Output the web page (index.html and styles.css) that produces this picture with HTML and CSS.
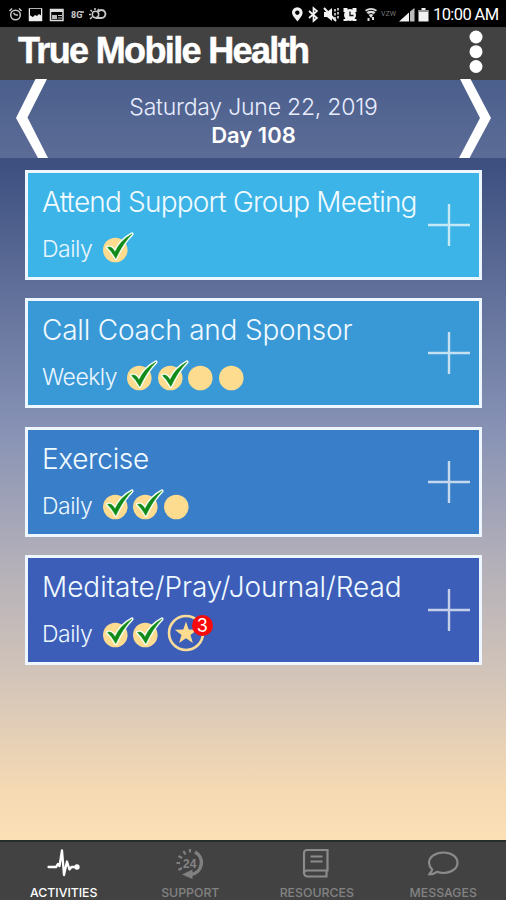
FILE: index.html
```
<!DOCTYPE html>
<html lang="en">
<head>
  <meta charset="UTF-8" />
  <meta name="viewport" content="width=device-width, initial-scale=1" />
  <title>True Mobile Health</title>
  <link rel="stylesheet" href="styles.css">
</head>
<body>
  <svg class="sprite" width="0" height="0">
    <symbol id="dot" viewBox="0 0 30 34">
      <circle cx="12.300" cy="20" r="12.300" fill="#fddc8f" />
    </symbol>
    <symbol id="check" viewBox="0 0 30 34" overflow="visible">
      <circle cx="12.300" cy="20" r="12.300" fill="#fddc8f" />
      <path d="M4.500 17.500Q8.500 15.500 12 22Q17.500 10 29 4Q20 13 12.800 28.500Q9 21.500 4.500 17.500Z" fill="#f4fff6" stroke="#f4fff6" stroke-width="3.200" stroke-linejoin="round" />
      <path d="M4.500 17.500Q8.500 15.500 12 22Q17.500 10 29 4Q20 13 12.800 28.500Q9 21.500 4.500 17.500Z" fill="#118a17" stroke="#118a17" stroke-width="0.500" />
    </symbol>
    <symbol id="plus" viewBox="0 0 42 42">
      <path d="M21 0V42M0 21H42" stroke="#fff" stroke-width="2.400" />
    </symbol>
  </svg>

  <div class="app">
    <div class="status-bar">
      <svg class="status-left" width="110" height="27" viewBox="0 0 110 27" fill="none" stroke="#c8c8c8" stroke-width="1.500">
        <circle cx="15.500" cy="15" r="4.800" />
        <path d="M15.500 15h2.500M13.500 13l2 2M9.500 11l2.500-2.500M21.500 11l-2.500-2.500" />
        <rect x="29.500" y="9" width="12" height="11.500" stroke="#eee" />
        <path d="M30 9h11v6l-2-2-2 2-2-1-2 2-3-1z" fill="#000" stroke="none" />
        <path d="M30 20.500v-5l3 1.500 2-2 2 1 2-2 2.500 2v4.500z" fill="#eee" stroke="none" />
        <rect x="50.500" y="9.500" width="12.500" height="11" stroke="#ddd" />
        <path d="M50 10.500h13" stroke="#ddd" stroke-width="3" />
        <path d="M52 15h5v4h-5z" fill="#bbb" stroke="none" />
        <path d="M58 15.500h4M58 18h4" stroke-width="1" />
        <text class="status-glyph" x="71" y="18">8G</text>
        <path d="M81 12h3" />
        <circle cx="95.500" cy="14.500" r="3.200" />
        <path d="M95 8v2M90.500 10l1.500 1.500M89 14.500h2M90 19l2-2M99 9l-1.500 2" />
        <path d="M95.500 18h6a4 4 0 1 0-3.500-6" stroke-width="1.800" />
      </svg>
      <svg class="status-right" width="145" height="27" viewBox="0 0 145 27" fill="#f2f2f2">
        <path fill-rule="evenodd" d="M9.500 21.500C5.500 16.500 4 14.500 4 12.500a5.300 5.300 0 0 1 10.600 0C14.600 14.500 13.500 16.500 9.500 21.500ZM9.300 10.500a2.200 2.200 0 1 0 .01 0Z" />
        <path d="M21 11l8 7-3.500 3V8l3.500 3-8 7" fill="none" stroke="#f2f2f2" stroke-width="1.700" />
        <path d="M36 12h3l5-4v13l-5-4h-3z" />
        <path d="M36 8l12 13" stroke="#f2f2f2" stroke-width="2" />
        <path d="M47 9v12M50 8v12" stroke="#ddd" stroke-width="1.600" stroke-dasharray="2.500 1.500" />
        <path d="M55.500 8h4v2h5V8h4v4h-2v7h2v2h-4v-1h-5v1h-4v-2h2v-7h-2z" />
        <circle cx="62" cy="15" r="6" />
        <path d="M62 11.500v4h3.500" fill="none" stroke="#111" stroke-width="1.300" />
        <path d="M77 10q6-4 12 0l-6 8z" fill="#ddd" />
        <path d="M78 12q5-3.500 10 0M80 14.500q3-2 6 0" stroke="#111" fill="none" />
        <path d="M80.500 18v3M85 17v3" stroke="#ddd" stroke-width="2" />
        <text class="status-carrier" x="93" y="15.500">VZW</text>
        <path d="M111 21.500L121 12.500V21.500z" />
        <path d="M122 21.500v-10L126.500 8v13.500z" fill="#bbb" />
        <path d="M130.500 10h3V8h4v2h3v11.500h-10z" />
        <path d="M131 11h9" stroke="#777" stroke-width="1.500" />
      </svg>
      <span class="clock">10:00 AM</span>
    </div>

    <div class="header">
      <h1 class="logo">True Mobile Health</h1>
      <svg class="menu-icon" width="16" height="44" viewBox="0 0 16 44" fill="#fff">
        <circle cx="8" cy="7" r="6.500" />
        <circle cx="8" cy="21.700" r="6.500" />
        <circle cx="8" cy="36.500" r="6.500" />
      </svg>
    </div>

    <div class="date-bar">
      <svg class="arrow" width="32" height="79" viewBox="0 0 32 79">
        <path d="M19.500 0H31L11.500 38.500L32 79H22L0 39Z" fill="#fff" />
      </svg>
      <div class="date-info">
        <div class="date">Saturday June 22, 2019</div>
        <div class="day">Day 108</div>
      </div>
      <svg class="arrow" width="32" height="79" viewBox="0 0 32 79">
        <path d="M1 0H11.500L32 39L10.500 79H0L21 39Z" fill="#fff" />
      </svg>
    </div>

    <div class="activities">
      <div class="card card-support">
        <div class="card-body">
          <div class="card-title title-support">Attend Support Group Meeting</div>
          <div class="card-row">
            <span class="frequency">Daily</span>
            <svg class="mark"><use href="#check" /></svg>
          </div>
        </div>
        <svg class="plus"><use href="#plus" /></svg>
      </div>
      <div class="card card-coach">
        <div class="card-body">
          <div class="card-title title-coach">Call Coach and Sponsor</div>
          <div class="card-row">
            <span class="frequency weekly">Weekly</span>
            <svg class="mark"><use href="#check" /></svg>
            <svg class="mark"><use href="#check" /></svg>
            <svg class="mark"><use href="#dot" /></svg>
            <svg class="mark"><use href="#dot" /></svg>
          </div>
        </div>
        <svg class="plus"><use href="#plus" /></svg>
      </div>
      <div class="card card-exercise">
        <div class="card-body">
          <div class="card-title title-exercise">Exercise</div>
          <div class="card-row">
            <span class="frequency">Daily</span>
            <svg class="mark"><use href="#check" /></svg>
            <svg class="mark"><use href="#check" /></svg>
            <svg class="mark"><use href="#dot" /></svg>
          </div>
        </div>
        <svg class="plus"><use href="#plus" /></svg>
      </div>
      <div class="card card-meditate">
        <div class="card-body">
          <div class="card-title title-meditate">Meditate/Pray/Journal/Read</div>
          <div class="card-row">
            <span class="frequency">Daily</span>
            <svg class="mark"><use href="#check" /></svg>
            <svg class="mark"><use href="#check" /></svg>
            <div class="star">
              <svg width="38" height="38" viewBox="0 0 38 38">
                <circle cx="19" cy="19" r="17" fill="none" stroke="#f8dc98" stroke-width="2.600" />
                <path d="M19 7.500l2.700 8 8.500.2-6.700 5.200 2.400 8.200L19 24.200l-6.900 4.900 2.400-8.200-6.700-5.200 8.500-.2z" fill="#fddc8f" />
              </svg>
              <span class="badge">3</span>
            </div>
          </div>
        </div>
        <svg class="plus"><use href="#plus" /></svg>
      </div>
    </div>

    <div class="tab-bar">
      <div class="tab active">
        <svg width="34" height="32" viewBox="0 0 34 32" fill="none" stroke="#fff" stroke-width="2.300" stroke-linejoin="round" stroke-linecap="round">
          <path d="M2.500 18H10l2-3 1.500 2L16 1.500 18 26l3-13.500 2.500 8 2-2.500H30" />
          <circle cx="31" cy="18" r="1.500" fill="#fff" />
        </svg>
        <span>ACTIVITIES</span>
      </div>
      <div class="tab">
        <svg width="34" height="32" viewBox="0 0 34 32">
          <path d="M22 3A12 12 0 0 1 18 25.500" fill="none" stroke="#808080" stroke-width="3.500" />
          <path d="M19.500 20.500V30L9 25.500z" fill="#808080" />
          <path d="M17 0v3.500M10.500 2l2 3.500M5.500 7l3.500 2M3.500 14H7M5.500 21l3.500-2" stroke="#808080" stroke-width="2.200" />
          <text class="support-hours" x="10" y="18.500">24</text>
        </svg>
        <span>SUPPORT</span>
      </div>
      <div class="tab">
        <svg width="34" height="32" viewBox="0 0 34 32" fill="none" stroke="#8b8b8b" stroke-width="2.200">
          <path d="M28.500 27.500H8.500a3.500 3.500 0 0 1-3.500-3.500V4a3 3 0 0 1 3-3H28.500V21.500H8a3 3 0 0 0-3 3M27.500 21.500v6" />
          <path d="M11.500 7.500h12M11.500 12.500h12" />
        </svg>
        <span>RESOURCES</span>
      </div>
      <div class="tab">
        <svg width="34" height="32" viewBox="0 0 34 32" fill="none" stroke="#8b8b8b" stroke-width="2.200">
          <path d="M17.500 3.500c8 0 14 4.500 14 10.200S25.500 24 17.500 24c-2.500 0-4.500-.4-6.500-1.200C9 24.300 6.500 25.500 3 25.500c1.800-1.800 2.900-3.500 3.200-5C4.300 18.500 3 16.300 3 13.700 3 8 9.500 3.500 17.500 3.500z" stroke-linejoin="round" />
        </svg>
        <span>MESSAGES</span>
      </div>
    </div>
  </div>
</body>
</html>
```
FILE: styles.css
```
* {
  margin: 0;
  padding: 0;
  box-sizing: border-box;
}

body {
  font-family: 'Inter', sans-serif;
  color: #fff;
  width: 506px;
  height: 900px;
  overflow: hidden;
}

svg {
  display: block;
  flex-shrink: 0;
}

.sprite {
  position: absolute;
}

.app {
  display: flex;
  flex-direction: column;
  height: 900px;
  background: linear-gradient(#3d5080 0, #3d5080 165px, #8792b5 430px, #b2afb9 560px, #d5c6b9 685px, #f5d9b3 790px, #fbdfb5 840px);
}

.status-bar {
  display: flex;
  justify-content: space-between;
  height: 27px;
  background: #000;
  padding-right: 8px;
}

.status-right {
  margin-left: auto;
}

.status-glyph {
  font: bold 9px 'Roboto', sans-serif;
  fill: #ccc;
  stroke: none;
}

.status-carrier {
  font: 7px 'Roboto', sans-serif;
  fill: #777;
}

.clock {
  width: 65px;
  font: 16.500px/30px 'Roboto', sans-serif;
  letter-spacing: -0.600px;
  white-space: nowrap;
}

.header {
  display: flex;
  justify-content: space-between;
  height: 53px;
  background: #424242;
  padding: 3px 22px 0 18px;
}

.logo {
  font: bold 36px/41px 'Liberation Sans', sans-serif;
  letter-spacing: -1.650px;
  white-space: nowrap;
  -webkit-text-stroke: 0.500px #fff;
}

.date-bar {
  display: flex;
  justify-content: space-between;
  height: 78px;
  background: linear-gradient(#4b5f8c, #5c6c97);
  padding: 0 15px 0 16px;
}

.arrow {
  margin-top: -1px;
}

.date-info {
  padding-top: 13px;
  text-align: center;
  font-size: 23px;
  line-height: 28px;
}

.date {
  font-weight: 300;
  letter-spacing: -0.220px;
  color: #e9edff;
}

.day {
  font-weight: 600;
  font-size: 22px;
}

.activities {
  display: flex;
  flex-direction: column;
  gap: 18.300px;
  flex: 1;
  padding: 12px 24px 0 25px;
}

.card {
  display: flex;
  justify-content: space-between;
  height: 110px;
  border: 3px solid #eef7ff;
  padding: 0 9px 0 14px;
}

.card-support {
  background: #3cb4e7;
}

.card-coach {
  background: #3998d6;
}

.card-exercise {
  background: #397ec8;
}

.card-meditate {
  background: #3c5eb9;
}

.card-title {
  padding-top: 11px;
  font-size: 28px;
  line-height: 36px;
  font-weight: 300;
  color: #f0faff;
  white-space: nowrap;
}

.title-support {
  letter-spacing: -0.800px;
}

.title-coach {
  letter-spacing: -0.200px;
}

.title-exercise {
  letter-spacing: -0.350px;
}

.title-meditate {
  letter-spacing: -0.050px;
}

.card-row {
  display: flex;
  height: 34px;
  margin-top: 11px;
}

.frequency {
  width: 60.500px;
  font-size: 23px;
  line-height: 36px;
  font-weight: 300;
  letter-spacing: -0.500px;
  color: #eaf6ff;
}

.weekly {
  width: 85px;
}

.mark {
  width: 30px;
  height: 34px;
  margin: -1px 0.600px 0 0;
  overflow: visible;
}

.star {
  position: relative;
  margin: -2px 0 0 3px;
}

.badge {
  position: absolute;
  top: 1px;
  left: 25px;
  width: 21px;
  height: 21px;
  border-radius: 50%;
  background: #f80a0a;
  font-size: 18px;
  line-height: 21px;
  text-align: center;
}

.plus {
  width: 42px;
  height: 42px;
  margin-top: 31px;
  opacity: 0.7;
}

.tab-bar {
  display: flex;
  height: 60px;
  background: #424242;
  border-top: 2px solid #262e2c;
}

.tab {
  display: flex;
  flex: 1;
  flex-direction: column;
  align-items: center;
  padding-top: 7px;
  font-size: 12.300px;
  line-height: 16px;
  font-weight: 500;
  color: #828282;
}

.tab span {
  margin: 4px 0 0 1px;
}

.tab.active {
  color: #fff;
}

.support-hours {
  font: bold 12px 'Liberation Sans', sans-serif;
  fill: #858585;
}
```
